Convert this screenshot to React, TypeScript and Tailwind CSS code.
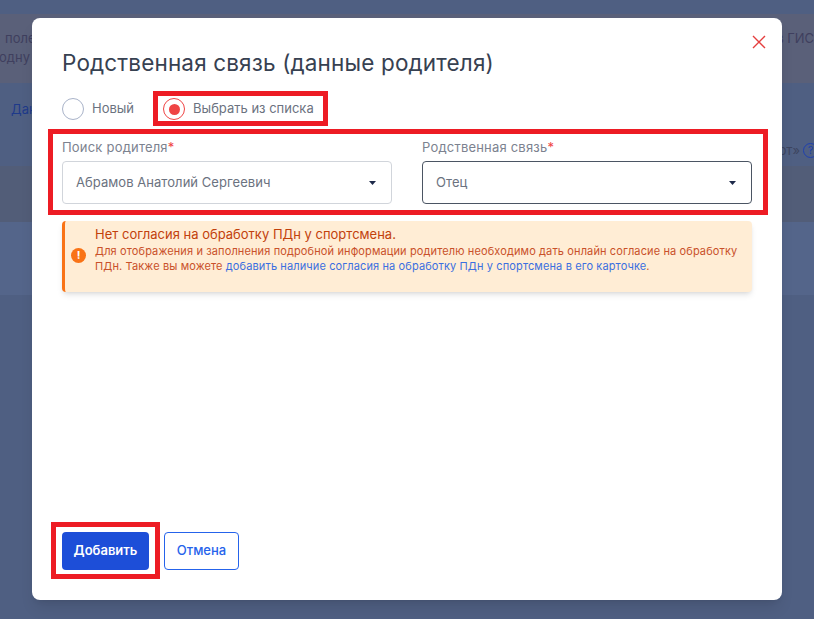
const INTER = "font-['Inter','Noto_Sans',sans-serif]";

function Caret() {
  return (
    <svg width="7" height="4" viewBox="0 0 7 4" className="shrink-0">
      <path d="M0 0h7L3.5 4z" fill="#1e2a4a" />
    </svg>
  );
}

function Select({ label, value, focused }: { label: string; value: string; focused?: boolean }) {
  return (
    <div className="w-[330px]">
      <div className="text-[13px] leading-[20px] text-[#7c828f] tracking-[0.2px]">
        {label}
        <span className="text-[#ef4444]">*</span>
      </div>
      <div
        className={`mt-[4px] h-[43px] rounded-[4px] border bg-white pl-[13px] pr-[15px] flex items-center justify-between text-[13px] text-[#6b7280] tracking-[0.05px] ${
          focused ? "border-[#4b5563]" : "border-[#d1d5db]"
        }`}
      >
        <span>{value}</span>
        <Caret />
      </div>
    </div>
  );
}

export default function App() {
  return (
    <div className={`relative w-[814px] h-[619px] overflow-hidden bg-[#4f5f82] ${INTER}`}>
      <div className="pt-[14px] flex flex-col">
        <div className="h-[69px] bg-[#5a6079] pt-[15px] text-[13px] leading-[19px] text-[#3f3f5e] whitespace-nowrap flex justify-between">
          <div>
            <div className="pl-[5px]">поле</div>
            <div className="ml-[-1px]">одну а</div>
          </div>
          <div>в ГИС</div>
        </div>
        <div className="h-[83px] bg-[#4f5f82] pl-[11px] pt-[17px] text-[13px] text-[#1e3a8a] flex justify-between">
          <span>Дан</span>
          <span className="self-end mb-[6px] text-[13px] text-[#3d4560] flex items-center gap-[3px] mr-[-4px]">
            рт»
            <span className="w-[15px] h-[15px] rounded-full border border-[#1e40af] text-[#1e40af] flex items-center justify-center text-[11px]">
              ?
            </span>
          </span>
        </div>
        <div className="h-[56px] bg-[#525d78]" />
        <div className="h-[73px] bg-[#54658a]" />
      </div>

      <div className="absolute left-[32px] top-[18px] w-[750px] h-[582px] rounded-[8px] bg-white shadow-lg flex flex-col pl-[30px] pr-[30px]">
        <button className="absolute right-[16px] top-[17px]" aria-label="Закрыть">
          <svg width="14" height="14" viewBox="0 0 14 14">
            <path d="M1 1l12 12M13 1L1 13" stroke="#e53e3e" strokeWidth="1.4" fill="none" />
          </svg>
        </button>

        <h2 className="mt-[30px] text-[22.5px] leading-[30px] font-normal text-[#374151] tracking-[0.15px]">
          Родственная связь (данные родителя)
        </h2>

        <div className="mt-[20px] flex items-center h-[22px] text-[13px] text-[#6b7280]">
          <div className="w-[22px] h-[22px] rounded-full border border-[#a9b3c9]" />
          <span className="ml-[8px]">Новый</span>
          <div className="ml-[29px] w-[22px] h-[22px] rounded-full border border-[#ef4444] flex items-center justify-center">
            <div className="w-[11px] h-[11px] rounded-full bg-[#ef4444]" />
          </div>
          <span className="ml-[8px]">Выбрать из списка</span>
        </div>

        <div className="mt-[17px] flex justify-between">
          <Select label="Поиск родителя" value="Абрамов Анатолий Сергеевич" />
          <Select label="Родственная связь" value="Отец" focused />
        </div>

        <div className="mt-[17px] h-[71px] rounded-[4px] border-l-[3px] border-[#f97316] bg-[#ffedd5] shadow-md flex items-start pl-[6px] pr-[10px] pt-[5px]">
          <div className="mt-[22px] w-[15px] h-[15px] rounded-full bg-[#f97316] text-white text-[11px] font-bold flex items-center justify-center shrink-0">
            !
          </div>
          <div className="ml-[9px] text-[#c2410c]">
            <div className="text-[13px] leading-[16px]">Нет согласия на обработку ПДн у спортсмена.</div>
            <div className="mt-[2px] text-[11px] leading-[15px] tracking-[0.12px] text-[#c9512a]">
              Для отображения и заполнения подробной информации родителю необходимо дать онлайн согласие на обработку ПДн.
              Также вы можете <span className="text-[#3b6fe0]">добавить наличие согласия на обработку ПДн у спортсмена в его карточке</span>.
            </div>
          </div>
        </div>

        <div className="mt-auto mb-[30px] flex gap-[15px]">
          <button className="h-[38px] w-[87px] rounded-[4px] bg-[#1d4ed8] text-white text-[13px] font-semibold">Добавить</button>
          <button className="h-[38px] w-[75px] rounded-[4px] border border-[#2563eb] bg-white text-[#2563eb] text-[13px] font-medium">Отмена</button>
        </div>
      </div>

      {/* Red annotation frames drawn over the screenshot */}
      <div className="absolute left-[153px] top-[91px] w-[175px] h-[35px] border-[5px] border-[#ed1c24]" />
      <div className="absolute left-[48px] top-[129px] w-[720px] h-[86px] border-[5px] border-[#ed1c24]" />
      <div className="absolute left-[51px] top-[522px] w-[109px] h-[57px] border-[5px] border-[#ed1c24]" />
    </div>
  );
}
